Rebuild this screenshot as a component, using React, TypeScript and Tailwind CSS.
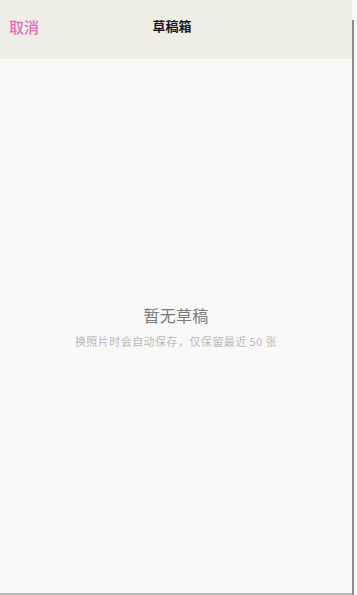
import React from "react";

export default function App() {
  return (
    <div
      className="w-[357px] h-[595px] bg-[#f8f8f8] flex overflow-hidden"
      style={{ fontFamily: '"Noto Sans CJK SC", "Noto Sans", sans-serif' }}
    >
      <div className="w-[352px] h-full flex flex-col border-b-2 border-[#bdbdbd]">
        <div className="h-[59px] bg-[#eeede8] flex items-start pt-[16px] px-[9px] relative">
          <span className="text-[15px] leading-[22px] font-medium text-[#e36bbd]">取消</span>
          <span className="absolute left-0 right-[8px] top-[16px] text-center text-[13px] leading-[20px] font-bold text-[#1a1a1a] pointer-events-none">
            草稿箱
          </span>
        </div>
        <div className="flex-1 flex flex-col items-center pt-[245px]">
          <div className="text-[16px] text-[#7a7a7a] leading-[22px] tracking-[0.3px]">暂无草稿</div>
          <div className="mt-[8px] text-[11px] text-[#b8b8b8] leading-[15px] tracking-[0.45px]">
            换照片时会自动保存，仅保留最近 50 张
          </div>
        </div>
      </div>
      <div className="w-[1.5px] h-full bg-[#8a8a8a] mt-[20px]" />
      <div className="flex-1 bg-[#fafafa]" />
    </div>
  );
}
